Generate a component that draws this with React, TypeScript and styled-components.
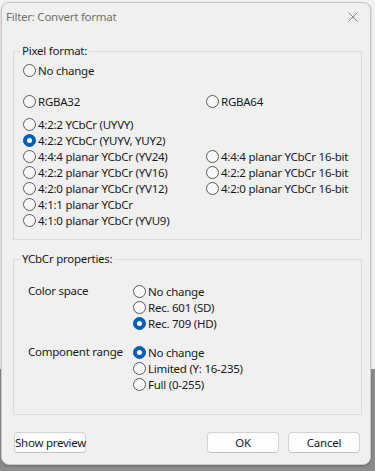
import React from 'react';
import styled, { createGlobalStyle } from 'styled-components';

const GlobalStyle = createGlobalStyle`
  html, body {
    margin: 0;
    padding: 0;
  }
  body {
    width: 375px;
    height: 471px;
    overflow: hidden;
    background: linear-gradient(to bottom, #f4f4f4 0, #f4f4f4 369px, #8c8c8c 369px);
    font-family: "Noto Sans", "Open Sans", sans-serif;
    font-size: 11.5px;
    letter-spacing: -0.25px;
    color: #1a1a1a;
  }
`;

const Desktop = styled.div`
  padding: 2px 0 0 1px;
`;

const Dialog = styled.div`
  width: 368px;
  height: 461px;
  background: #f0f0f0;
  border: 1px solid #c9c9c9;
  border-radius: 8px;
  display: flex;
  flex-direction: column;
  box-shadow: 0 1px 3px rgba(0, 0, 0, 0.25);
`;

const TitleBar = styled.div`
  height: 27px;
  display: flex;
  align-items: center;
  justify-content: space-between;
  padding: 0 10px 0 4px;
`;

const Title = styled.span`
  color: #707070;
`;

const CloseButton = styled.svg`
  width: 10px;
  height: 10px;
  margin-right: 2px;
`;

const Group = styled.fieldset<{ $mt: number; $pt: number; $pb: number }>`
  margin: ${p => p.$mt}px 8px 0 11px;
  padding: ${p => p.$pt}px 0 ${p => p.$pb}px 0;
  border: 1px solid #dcdcdc;
  min-width: 0;
`;

const Legend = styled.legend`
  margin-left: 6px;
  padding: 0 2px;
  line-height: 16px;
`;

const RadioCol = styled.div<{ $pl: number }>`
  padding-left: ${p => p.$pl}px;
  display: flex;
  flex-direction: column;
`;

const RadioGrid = styled.div<{ $mt: number }>`
  margin-top: ${p => p.$mt}px;
  display: grid;
  grid-template-columns: 183px 1fr;
  grid-auto-rows: 16px;
`;

const RadioLabel = styled.label`
  display: flex;
  align-items: center;
  height: 16px;
  gap: 2px;
  white-space: nowrap;
`;

const Circle = styled.span<{ $on: boolean }>`
  box-sizing: border-box;
  width: 13px;
  height: 13px;
  border-radius: 50%;
  border: 1px solid ${p => (p.$on ? '#005fb8' : '#5a5a5a')};
  background: ${p => (p.$on ? '#005fb8' : '#f7f7f7')};
  display: flex;
  align-items: center;
  justify-content: center;
  flex: none;
  &::after {
    content: '';
    display: ${p => (p.$on ? 'block' : 'none')};
    width: 5px;
    height: 5px;
    border-radius: 50%;
    background: #ffffff;
  }
`;

const PropRow = styled.div<{ $mt: number }>`
  margin-top: ${p => p.$mt}px;
  display: grid;
  grid-template-columns: 105px 1fr;
`;

const PropLabel = styled.span`
  line-height: 16px;
`;

const Footer = styled.div`
  margin-top: 17px;
  padding: 0 10px 0 12px;
  display: flex;
  align-items: center;
`;

const Button = styled.button`
  box-sizing: border-box;
  width: 72px;
  height: 21px;
  padding: 0;
  background: #fdfdfd;
  border: 1px solid #d3d3d3;
  border-bottom-color: #c2c2c2;
  border-radius: 4px;
  font-family: inherit;
  font-size: inherit;
  letter-spacing: inherit;
  white-space: nowrap;
  color: #1a1a1a;
  & + & {
    margin-left: 9px;
  }
`;

const Spacer = styled.div`
  flex: 1;
`;

function Radio({ label, on = false }: { label: string; on?: boolean }) {
  return (
    <RadioLabel>
      <Circle $on={on} />
      <span>{label}</span>
    </RadioLabel>
  );
}

const Empty = styled.span``;

export default function App() {
  return (
    <>
      <GlobalStyle />
      <Desktop>
        <Dialog>
          <TitleBar>
            <Title>Filter: Convert format</Title>
            <CloseButton viewBox="0 0 10 10">
              <path d="M0.5 0.5 L9.5 9.5 M9.5 0.5 L0.5 9.5" stroke="#8a8a8a" strokeWidth="1" />
            </CloseButton>
          </TitleBar>

          <Group $mt={13} $pt={3} $pb={11}>
            <Legend>Pixel format:</Legend>
            <RadioCol $pl={9}>
              <Radio label="No change" />
              <RadioGrid $mt={15}>
                <Radio label="RGBA32" />
                <Radio label="RGBA64" />
              </RadioGrid>
              <RadioGrid $mt={7}>
                <Radio label="4:2:2 YCbCr (UYVY)" />
                <Empty />
                <Radio label="4:2:2 YCbCr (YUYV, YUY2)" on />
                <Empty />
                <Radio label="4:4:4 planar YCbCr (YV24)" />
                <Radio label="4:4:4 planar YCbCr 16-bit" />
                <Radio label="4:2:2 planar YCbCr (YV16)" />
                <Radio label="4:2:2 planar YCbCr 16-bit" />
                <Radio label="4:2:0 planar YCbCr (YV12)" />
                <Radio label="4:2:0 planar YCbCr 16-bit" />
                <Radio label="4:1:1 planar YCbCr" />
                <Empty />
                <Radio label="4:1:0 planar YCbCr (YVU9)" />
              </RadioGrid>
            </RadioCol>
          </Group>

          <Group $mt={11} $pt={16} $pb={22}>
            <Legend>YCbCr properties:</Legend>
            <RadioCol $pl={14}>
              <PropRow $mt={0}>
                <PropLabel>Color space</PropLabel>
                <RadioCol $pl={0}>
                  <Radio label="No change" />
                  <Radio label="Rec. 601 (SD)" />
                  <Radio label="Rec. 709 (HD)" on />
                </RadioCol>
              </PropRow>
              <PropRow $mt={13}>
                <PropLabel>Component range</PropLabel>
                <RadioCol $pl={0}>
                  <Radio label="No change" on />
                  <Radio label="Limited (Y: 16-235)" />
                  <Radio label="Full (0-255)" />
                </RadioCol>
              </PropRow>
            </RadioCol>
          </Group>

          <Footer>
            <Button>Show preview</Button>
            <Spacer />
            <Button>OK</Button>
            <Button>Cancel</Button>
          </Footer>
        </Dialog>
      </Desktop>
    </>
  );
}
